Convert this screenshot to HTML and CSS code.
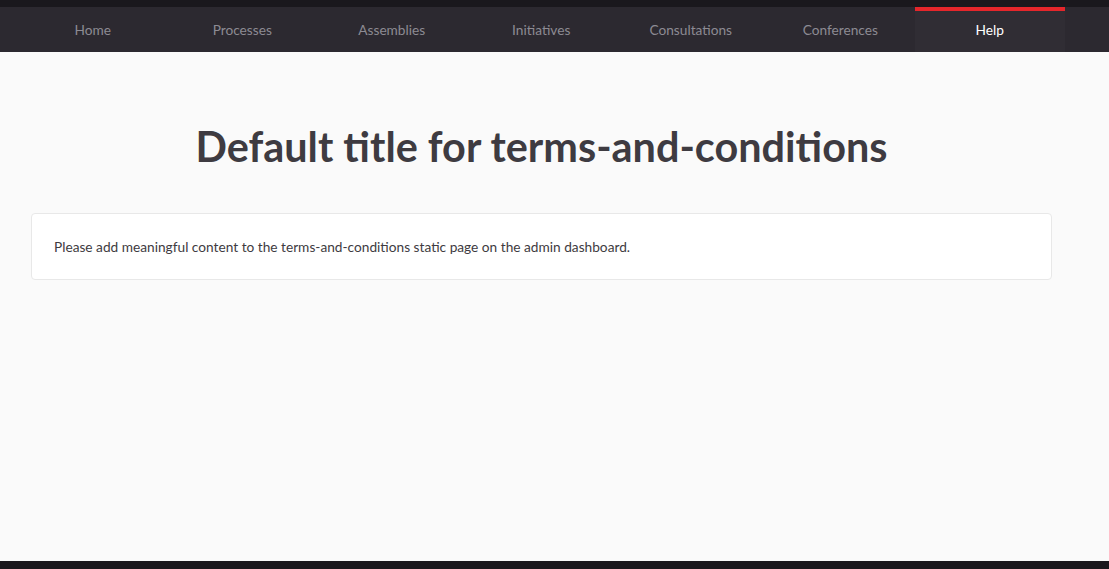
FILE: index.html
```html
<!DOCTYPE html>
<html lang="en">
<head>
<meta charset="utf-8">
<title>Default title for terms-and-conditions</title>
<link rel="stylesheet" href="styles.css">
</head>
<body>
<div class="topbar"></div>
<nav class="mainnav">
  <ul class="nav-list">
    <li class="nav-item"><a href="#">Home</a></li>
    <li class="nav-item"><a href="#">Processes</a></li>
    <li class="nav-item"><a href="#">Assemblies</a></li>
    <li class="nav-item"><a href="#">Initiatives</a></li>
    <li class="nav-item"><a href="#">Consultations</a></li>
    <li class="nav-item"><a href="#">Conferences</a></li>
    <li class="nav-item active"><a href="#">Help</a></li>
  </ul>
</nav>
<main class="main">
  <h1 class="page-title">Default title for terms-and-conditions</h1>
  <div class="card">
    <p class="card-text">Please add meaningful content to the terms-and-conditions static page on the admin dashboard.</p>
  </div>
</main>
<footer class="footer"></footer>
</body>
</html>
```

FILE: styles.css
```css
html, body {
  margin: 0;
  padding: 0;
  height: 100%;
}
body {
  background: #fafafa;
  font-family: "Lato", "Liberation Sans", sans-serif;
  color: #3e3b41;
  display: flex;
  flex-direction: column;
  min-height: 569px;
}
.topbar {
  height: 7px;
  background: #1a181d;
}
.mainnav {
  background: #2c2930;
  height: 45px;
  padding: 0 44px 0 18px;
}
.nav-list {
  list-style: none;
  margin: 0;
  padding: 0;
  display: flex;
  height: 100%;
}
.nav-item {
  width: 149.5px;
  display: flex;
  align-items: center;
  justify-content: center;
  box-sizing: border-box;
  border-top: 4px solid transparent;
  padding-bottom: 4px;
}
.nav-item a {
  color: #8d8b93;
  text-decoration: none;
  font-size: 13.7px;
}
.nav-item.active {
  background: #302d34;
  border-top-color: #e5262b;
}
.nav-item.active a {
  color: #ffffff;
}
.main {
  flex: 1;
  padding: 0 57px 0 31px;
}
.page-title {
  text-align: center;
  font-size: 41.4px;
  font-weight: 700;
  margin: 72px 0 43px;
  line-height: 1.1;
  color: #3e3b41;
}
.card {
  background: #ffffff;
  border: 1px solid #e8e8e8;
  border-radius: 4px;
  padding: 24px 22px 23px;
}
.card-text {
  margin: 0;
  font-size: 13.7px;
  line-height: 18px;
  color: #3e3b41;
}
.footer {
  height: 8px;
  background: #1a181d;
}
```
